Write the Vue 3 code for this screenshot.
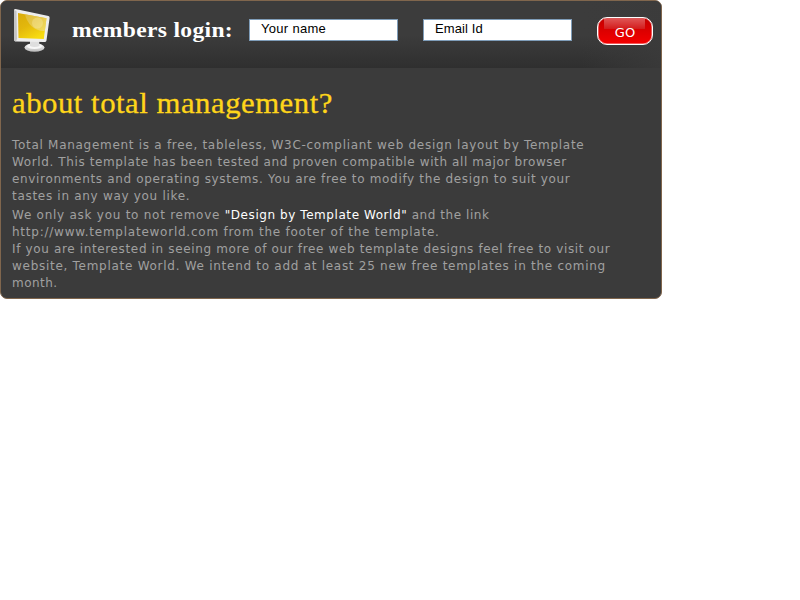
<script setup>
import { ref } from 'vue'

const name = ref('Your name')
const email = ref('Email Id')
const intro = [
  { text: 'Total Management is a free, tableless, W3C-compliant web design layout by Template', spacing: 0.71 },
  { text: 'World. This template has been tested and proven compatible with all major browser', spacing: 0.61 },
  { text: 'environments and operating systems. You are free to modify the design to suit your', spacing: 0.67 },
  { text: 'tastes in any way you like.', spacing: 0.7 },
]
const closing = [
  { text: 'http://www.templateworld.com from the footer of the template.', spacing: 0.76 },
  { text: 'If you are interested in seeing more of our free web template designs feel free to visit our', spacing: 0.64 },
  { text: 'website, Template World. We intend to add at least 25 new free templates in the coming', spacing: 0.72 },
  { text: 'month.', spacing: 0.45 },
]
</script>

<template>
  <main class="panel">
    <form class="login" @submit.prevent>
      <svg class="monitor" width="38" height="46" viewBox="0 0 38 46">
        <defs>
          <linearGradient id="screen" x1="0" y1="0" x2="0.6" y2="1">
            <stop offset="0" stop-color="#d9ab0a" />
            <stop offset="0.5" stop-color="#e3b70c" />
            <stop offset="1" stop-color="#f8dc10" />
          </linearGradient>
          <linearGradient id="shine" x1="0" y1="0" x2="1" y2="1">
            <stop offset="0" stop-color="#e0c04a" />
            <stop offset="1" stop-color="#f1df7c" />
          </linearGradient>
          <linearGradient id="stand" x1="0" y1="0" x2="0" y2="1">
            <stop offset="0" stop-color="#fff" />
            <stop offset="1" stop-color="#b9b9b9" />
          </linearGradient>
        </defs>
        <ellipse cx="21.5" cy="38.5" rx="10" ry="4.3" fill="url(#stand)" />
        <ellipse cx="21.5" cy="37.3" rx="7.5" ry="2.8" fill="#f7f7f7" />
        <path d="M17 31h9l.5 6q-5 2-9.500 0z" fill="#dedede" />
        <path d="M1 1Q1 0 2.500 0L35.500 7Q36.800 7.500 36.600 9L33.500 31.500Q33.300 33 31.500 33L3 32.500Q1 32.400 1 30.500z" fill="#ededed" />
        <path d="M1 1v29.500Q1 32.400 3 32.500L4 30 3.500 2z" fill="#c4c4c4" />
        <path d="M5 4 33.500 9.300 30.800 30 5.500 29z" fill="url(#screen)" />
        <path d="M12 5.300 33.500 9.300 31.800 22C22 22.500 14 15 12 5.300z" fill="url(#shine)" opacity=".75" />
        <circle cx="24.500" cy="14" r="5.500" fill="#fbf3c0" opacity=".3" />
      </svg>
      <h2 class="login-title">members login:</h2>
      <input v-model="name" class="field name" type="text" aria-label="Name" />
      <input v-model="email" class="field email" type="text" aria-label="Email" />
      <button class="go" type="submit">GO</button>
    </form>

    <section class="about">
      <h1>about total management?</h1>
      <div class="copy">
        <p v-for="line in intro" :key="line.text" :style="{ letterSpacing: line.spacing + 'px' }">{{ line.text }}</p>
        <p class="credit">We only ask you to not remove <strong>"Design by Template World"</strong><span class="link-note"> and the link</span></p>
        <p v-for="line in closing" :key="line.text" :style="{ letterSpacing: line.spacing + 'px' }">{{ line.text }}</p>
      </div>
    </section>
  </main>
</template>

<style>
body {
  background: #fff;
}
</style>

<style scoped>
.panel {
  box-sizing: border-box;
  width: 662px;
  height: 299px;
  overflow: hidden;
  border: 1px solid #80664d;
  border-radius: 7px;
  background: #3b3b3b;
}
.login {
  box-sizing: border-box;
  display: flex;
  align-items: flex-start;
  height: 67px;
  padding-left: 12px;
  background:
    linear-gradient(to right, #3b3b3b00 88%, #3b3b3bcc 100%),
    linear-gradient(#3c3c3c 0, #3c3c3c 34px, #2f2f2f 67px);
}
.monitor {
  flex: none;
  margin-top: 8px;
}
.login-title {
  flex: none;
  width: 177px;
  margin: 15px 0 0 21px;
  color: #fff;
  font: bold 22px/28px "Liberation Serif", serif;
  letter-spacing: 0.32px;
  white-space: nowrap;
  transform: scaleX(1.07);
  transform-origin: left;
}
.field {
  box-sizing: border-box;
  flex: none;
  width: 149px;
  height: 22px;
  margin: 18px 25px 0 0;
  padding: 0 11px 3px;
  border: 1px solid #7f9db9;
  border-radius: 0;
  outline: 0;
  background: #fff;
  color: #000;
  font: 13px "Liberation Sans", sans-serif;
  letter-spacing: 0.1px;
}
.name {
  letter-spacing: 0.3px;
}
.go {
  box-sizing: border-box;
  flex: none;
  width: 56px;
  height: 28px;
  padding: 2px 0 0;
  margin-top: 16px;
  border: 1px solid #fff;
  border-radius: 10px;
  box-shadow: inset 0 0 0 0.5px #ffffffb0;
  background:
    linear-gradient(#df5252, #d31c1c) 6px 1px / 41px 10px no-repeat,
    linear-gradient(#c50000, #f40000);
  color: #fff;
  font: 13px "DejaVu Sans", sans-serif;
}
.about {
  padding: 17px 11px 0;
}
h1 {
  margin: 0;
  color: #ffd51a;
  font: normal 30px/36px "Liberation Serif", serif;
  letter-spacing: 0.5px;
  white-space: nowrap;
  transform: scaleX(1.025);
  transform-origin: left;
  -webkit-text-stroke: 0.3px #ffd51a;
}
.copy {
  padding-top: 16px;
  color: #a0a0a0;
  font: 12px/17px "DejaVu Sans", sans-serif;
  white-space: nowrap;
}
.copy p {
  margin: 0;
}
.copy .credit {
  padding-top: 2px;
  letter-spacing: 0.74px;
}
.credit strong {
  color: #fff;
  font-weight: normal;
  letter-spacing: 0.57px;
}
.link-note {
  letter-spacing: 0.56px;
}
</style>
